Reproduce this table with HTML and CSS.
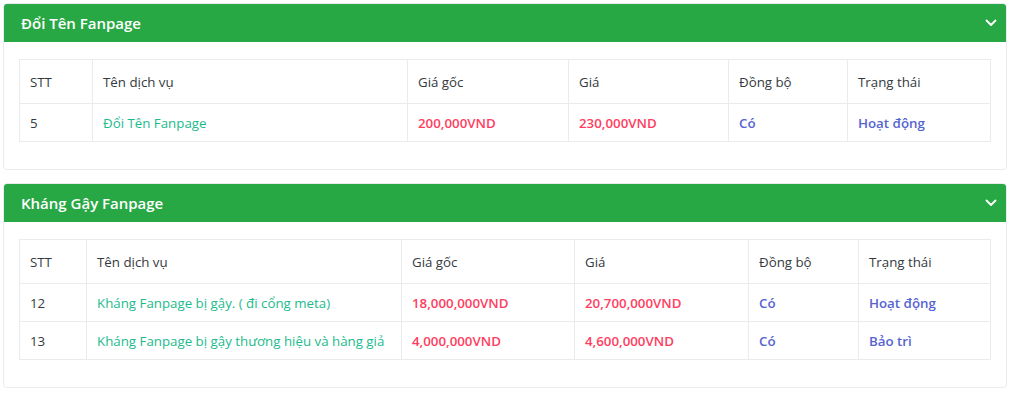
FILE: index.html
```html
<!DOCTYPE html>
<html lang="vi">
<head>
<meta charset="utf-8">
<title>Dịch vụ Fanpage</title>
<link rel="stylesheet" href="styles.css">
</head>
<body>
<div class="page">
  <section class="card">
    <header class="card-header">
      <h2 class="card-title">Đổi Tên Fanpage</h2>
      <svg class="chevron" width="12" height="8" viewBox="0 0 12 8"><path d="M1.5 1.5 L6 6 L10.5 1.5" fill="none" stroke="#fff" stroke-width="1.8" stroke-linecap="round" stroke-linejoin="round"/></svg>
    </header>
    <div class="card-body">
      <table class="table t1">
        <colgroup><col class="c1"><col class="c2"><col class="c3"><col class="c4"><col class="c5"><col class="c6"></colgroup>
        <thead>
          <tr><th>STT</th><th>Tên dịch vụ</th><th>Giá gốc</th><th>Giá</th><th>Đồng bộ</th><th>Trạng thái</th></tr>
        </thead>
        <tbody>
          <tr><td>5</td><td class="name">Đổi Tên Fanpage</td><td class="price">200,000VND</td><td class="price">230,000VND</td><td class="state">Có</td><td class="state">Hoạt động</td></tr>
        </tbody>
      </table>
    </div>
  </section>
  <section class="card">
    <header class="card-header">
      <h2 class="card-title">Kháng Gậy Fanpage</h2>
      <svg class="chevron" width="12" height="8" viewBox="0 0 12 8"><path d="M1.5 1.5 L6 6 L10.5 1.5" fill="none" stroke="#fff" stroke-width="1.8" stroke-linecap="round" stroke-linejoin="round"/></svg>
    </header>
    <div class="card-body">
      <table class="table t2">
        <colgroup><col class="c1"><col class="c2"><col class="c3"><col class="c4"><col class="c5"><col class="c6"></colgroup>
        <thead>
          <tr><th>STT</th><th>Tên dịch vụ</th><th>Giá gốc</th><th>Giá</th><th>Đồng bộ</th><th>Trạng thái</th></tr>
        </thead>
        <tbody>
          <tr><td>12</td><td class="name">Kháng Fanpage bị gậy. ( đi cổng meta)</td><td class="price">18,000,000VND</td><td class="price">20,700,000VND</td><td class="state">Có</td><td class="state">Hoạt động</td></tr>
          <tr><td>13</td><td class="name">Kháng Fanpage bị gậy thương hiệu và hàng giả</td><td class="price">4,000,000VND</td><td class="price">4,600,000VND</td><td class="state">Có</td><td class="state">Bảo trì</td></tr>
        </tbody>
      </table>
    </div>
  </section>
</div>
</body>
</html>
```
FILE: styles.css
```css
* { box-sizing: border-box; }
html, body { margin: 0; padding: 0; background: #fff; }
body {
  font-family: "Open Sans", "Noto Sans", sans-serif;
  color: #343a40;
  font-size: 13.3px;
}
.page {
  width: 1007px;
  padding: 3px 0 0 3px;
  display: flex;
  flex-direction: column;
  gap: 13px;
}
.card {
  border: 1px solid #e9ecef;
  border-radius: 4px;
  background: #fff;
  overflow: hidden;
}
.card-header {
  background: #28a745;
  height: 38px;
  display: flex;
  align-items: center;
  justify-content: space-between;
  padding: 0 9px 0 17px;
}
.card-title {
  margin: 0;
  color: #fff;
  font-size: 15px;
  font-weight: 600;
}
.chevron { display: block; }
.card-body {
  padding: 17px 15px 27px 15px;
}
.table {
  width: 971px;
  border-collapse: collapse;
  table-layout: fixed;
}
.table th, .table td {
  border: 1px solid #e9ecef;
  text-align: left;
  padding: 0 10px;
  white-space: nowrap;
}
.table th { height: 44px; font-weight: 400; }
.table td { height: 38px; }
.name { color: #1cbb8c; }
.price { color: #ff3d60; font-weight: 600; }
.state { color: #5664d2; font-weight: 600; }
.t1 .c1 { width: 73px; } .t1 .c2 { width: 315px; } .t1 .c3 { width: 161px; }
.t1 .c4 { width: 160px; } .t1 .c5 { width: 119px; } .t1 .c6 { width: 143px; }
.t2 .c1 { width: 67px; } .t2 .c2 { width: 315px; } .t2 .c3 { width: 173px; }
.t2 .c4 { width: 174px; } .t2 .c5 { width: 110px; } .t2 .c6 { width: 132px; }
```
